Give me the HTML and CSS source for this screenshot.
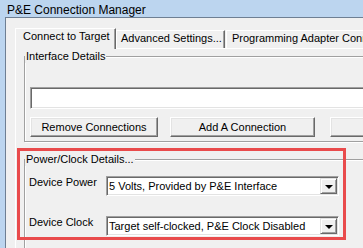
FILE: index.html
```html
<!DOCTYPE html>
<html lang="en">
  <head>
    <meta charset="UTF-8" />
    <meta name="viewport" content="width=device-width, initial-scale=1.0" />
    <title>P&amp;E Connection Manager</title>
    <link rel="stylesheet" href="styles.css">
  </head>
  <body>
    <div class="frame">
      <div class="caption">P&amp;E Connection Manager</div>
      <div class="client">
        <div class="tabs">
          <div class="tab active">Connect to Target</div>
          <div class="tab second">Advanced Settings...</div>
          <div class="tab third">Programming Adapter Connections</div>
        </div>
        <div class="panel">
          <fieldset class="group">
            <legend>Interface Details</legend>
            <div class="field"></div>
            <div class="actions">
              <button class="btn remove">Remove Connections</button>
              <button class="btn add">Add A Connection</button>
              <button class="btn refresh" aria-label="Refresh List"></button>
            </div>
          </fieldset>
          <fieldset class="group power">
            <legend>Power/Clock Details...</legend>
            <div class="row">
              <span class="label">Device Power</span>
              <div class="combo">
                <span class="value">5 Volts, Provided by P&amp;E Interface</span>
                <span class="arrow"></span>
              </div>
            </div>
            <div class="row">
              <span class="label">Device Clock</span>
              <div class="combo">
                <span class="value">Target self-clocked, P&amp;E Clock Disabled</span>
                <span class="arrow"></span>
              </div>
            </div>
          </fieldset>
        </div>
      </div>
    </div>
    <div class="highlight"></div>
  </body>
</html>
```

FILE: styles.css
```css
* {
  box-sizing: border-box;
}

html,
body {
  margin: 0;
  height: 100%;
  overflow: hidden;
}

body {
  background-color: #bcd5ef;
  font-family: "Liberation Sans", Arial, sans-serif;
  font-size: 11px;
  color: #000;
}

.frame {
  width: 560px;
  height: 100%;
  display: flex;
  flex-direction: column;
  padding-left: 5px;
}

.caption {
  height: 23px;
  padding: 3px 0 0 2px;
  font-size: 12px;
  line-height: 14px;
}

.client {
  flex: 1;
  background-color: #f0f0f0;
  border-top: 1px solid #6e7f93;
  border-left: 1px solid #6e7f93;
  padding: 10px 0 0 9px;
}

/* tab strip */
.tabs {
  display: flex;
  align-items: flex-end;
  height: 20px;
}

.tab {
  height: 18px;
  padding: 1px 0 0 4px;
  line-height: 13px;
  background-color: #f0f0f0;
  border-top: 1px solid #fff;
  border-left: 1px solid #fff;
  border-right: 1px solid #696969;
  box-shadow: inset -1px 0 0 #a0a0a0;
  white-space: nowrap;
  overflow: hidden;
}

.tab.active {
  position: relative;
  z-index: 1;
  width: 101px;
  height: 21px;
  margin-bottom: -1px;
  padding: 1px 0 0 7px;
}

.tab.second {
  width: 109px;
}

.tab.third {
  width: 300px;
  margin-left: 1px;
  padding-left: 5px;
}

.panel {
  border-top: 1px solid #fff;
  border-left: 1px solid #fff;
  padding-left: 8px;
}

/* group boxes */
.group {
  width: 500px;
  min-width: 0;
  margin: 1px 0 0;
  padding: 0;
  border: 1px solid #a0a0a0;
  box-shadow: 1px 1px 0 #fff, inset 1px 1px 0 #fff;
}

.group legend {
  padding: 0 1px;
  line-height: 13px;
  background-color: #f0f0f0;
}

.group.power {
  margin-top: 11px;
  height: 120px;
}

.field {
  width: 480px;
  height: 22px;
  margin: 24px 0 0 5px;
  background-color: #fff;
  border: 1px solid;
  border-color: #a0a0a0 #fff #fff #a0a0a0;
  box-shadow: inset 1px 1px 0 #696969, inset -1px -1px 0 #e3e3e3;
}

.actions {
  display: flex;
  margin: 8px 0 4px 5px;
}

.btn {
  height: 20px;
  padding: 0;
  font-family: inherit;
  font-size: 11px;
  color: #000;
  background-color: #f0f0f0;
  border: 1px solid;
  border-color: #fff #696969 #696969 #fff;
  box-shadow: inset -1px -1px 0 #a0a0a0, inset 1px 1px 0 #e3e3e3;
}

.btn.remove {
  width: 128px;
}

.btn.add {
  width: 145px;
  margin-left: 12px;
}

.btn.refresh {
  width: 128px;
  margin-left: 15px;
}

/* power / clock rows */
.row {
  display: flex;
  align-items: flex-start;
  margin: 10px 0 0 4px;
}

.row + .row {
  margin-top: 20px;
}

.label {
  width: 77px;
  line-height: 13px;
}

.combo {
  display: flex;
  align-items: center;
  width: 233px;
  height: 20px;
  padding: 1px;
  background-color: #fff;
  border: 1px solid;
  border-color: #a0a0a0 #fff #fff #a0a0a0;
  box-shadow: inset 1px 1px 0 #696969, inset -1px -1px 0 #e3e3e3;
}

.value {
  flex: 1;
  padding-left: 1px;
  white-space: nowrap;
  overflow: hidden;
}

.arrow {
  display: flex;
  align-items: center;
  justify-content: center;
  width: 17px;
  height: 16px;
  background-color: #f0f0f0;
  border: 1px solid;
  border-color: #e3e3e3 #696969 #696969 #e3e3e3;
  box-shadow: inset 1px 1px 0 #fff, inset -1px -1px 0 #a0a0a0;
}

.arrow::after {
  content: "";
  border-left: 4px solid transparent;
  border-right: 4px solid transparent;
  border-top: 4px solid #000;
  margin-top: 1px;
}

/* annotation drawn over the screenshot */
.highlight {
  position: absolute;
  left: 17px;
  top: 148px;
  width: 329px;
  height: 92px;
  border: 3px solid #e94b4c;
}
```
